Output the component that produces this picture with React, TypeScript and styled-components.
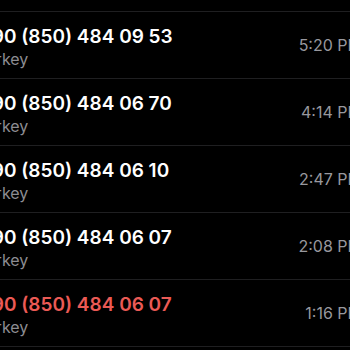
import React from 'react';
import styled, { createGlobalStyle } from 'styled-components';

const GlobalStyle = createGlobalStyle`
  html, body {
    margin: 0;
    padding: 0;
    background: #000000;
    overflow: hidden;
  }
  body {
    font-family: Inter, "Noto Sans", "Liberation Sans", sans-serif;
    -webkit-font-smoothing: antialiased;
  }
`;

const Screen = styled.div`
  width: 350px;
  height: 350px;
  overflow: hidden;
  background: #000000;
`;

// the list is wider than the window: the shot is cropped on both sides
const List = styled.ul`
  list-style: none;
  margin: 0 0 0 -21px;
  padding: 11px 0 0 0;
  width: 383px;
`;

const Row = styled.li`
  display: flex;
  align-items: center;
  justify-content: space-between;
  height: 66px;
  border-top: 1px solid #1f1f21;
  &:last-child {
    border-bottom: 1px solid #1f1f21;
  }
`;

const Caller = styled.div`
  display: flex;
  flex-direction: column;
  padding-top: 6px;
`;

const Number = styled.span<{ $missed?: boolean }>`
  font-size: 19px;
  font-weight: 600;
  line-height: 22px;
  color: ${p => (p.$missed ? '#eb5a55' : '#ffffff')};
  white-space: nowrap;
`;

const Country = styled.span`
  font-size: 16px;
  line-height: 22px;
  color: #8d8d92;
  margin-left: -2px;
`;

const Time = styled.span`
  font-size: 16px;
  line-height: 20px;
  color: #98989e;
  white-space: nowrap;
`;

type Call = { number: string; time: string; missed?: boolean };

const calls: Call[] = [
  { number: '+90 (850) 484 09 53', time: '5:20 PM' },
  { number: '+90 (850) 484 06 70', time: '4:14 PM' },
  { number: '+90 (850) 484 06 10', time: '2:47 PM' },
  { number: '+90 (850) 484 06 07', time: '2:08 PM' },
  { number: '+90 (850) 484 06 07', time: '1:16 PM', missed: true },
];

export default function App() {
  return (
    <Screen>
      <GlobalStyle />
      <List>
        {calls.map((c, i) => (
          <Row key={i}>
            <Caller>
              <Number $missed={c.missed}>{c.number}</Number>
              <Country>Turkey</Country>
            </Caller>
            <Time>{c.time}</Time>
          </Row>
        ))}
      </List>
    </Screen>
  );
}
